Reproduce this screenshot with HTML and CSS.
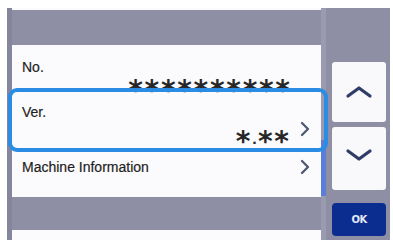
FILE: index.html
```html
<!DOCTYPE html>
<html>
<head>
<meta charset="utf-8">
<link rel="stylesheet" href="styles.css">
</head>
<body>
<div class="screen">
  <div class="panel">
    <div class="list">
      <div class="stub stub-top"></div>
      <div class="group">
        <div class="row row-no">
          <div class="label">No.</div>
          <div class="line line-no"><span class="ast">**********</span></div>
        </div>
        <div class="row row-ver">
          <div class="label">Ver.</div>
          <div class="line line-ver">
            <span class="ast">*</span><span class="dot">.</span><span class="ast">**</span>
            <svg class="chev" width="10" height="16" viewBox="0 0 10 16"><polyline points="2,2 8,8 2,14" fill="none" stroke="#4f596d" stroke-width="2.3" stroke-linecap="round" stroke-linejoin="round"/></svg>
          </div>
        </div>
        <div class="row row-mi">
          <div class="label grow">Machine Information</div>
          <svg class="chev" width="10" height="16" viewBox="0 0 10 16"><polyline points="2,2 8,8 2,14" fill="none" stroke="#4f596d" stroke-width="2.3" stroke-linecap="round" stroke-linejoin="round"/></svg>
        </div>
      </div>
      <div class="stub stub-bottom"></div>
    </div>
    <div class="scroll"><div class="thumb"></div></div>
    <div class="buttons">
      <div class="btn btn-up">
        <svg width="28" height="14" viewBox="0 0 28 14"><polyline points="3,11 14,3 25,11" fill="none" stroke="#2f3c68" stroke-width="3.2" stroke-linecap="round" stroke-linejoin="round"/></svg>
      </div>
      <div class="btn btn-down">
        <svg class="down-ico" width="28" height="14" viewBox="0 0 28 14"><polyline points="3,3 14,11 25,3" fill="none" stroke="#2f3c68" stroke-width="3.2" stroke-linecap="round" stroke-linejoin="round"/></svg>
      </div>
      <div class="btn btn-ok">OK</div>
    </div>
  </div>
</div>
</body>
</html>
```
FILE: styles.css
```css
html, body {
  margin: 0;
  padding: 0;
  background: #ffffff;
}
body {
  font-family: "Liberation Sans", Arial, sans-serif;
}
.screen {
  width: 393px;
  height: 240px;
  overflow: hidden;
  box-sizing: border-box;
  padding: 8px 0 0 7px;
}
.panel {
  display: flex;
  width: 383px;
  height: 232px;
  background: #8e8ea5;
}
.list {
  width: 309px;
  border-left: 5px solid #85859c;
  display: flex;
  flex-direction: column;
}
.stub {
  background: #fbfbfd;
}
.stub-top {
  height: 5px;
}
.stub-bottom {
  margin-top: 33px;
  height: 20px;
}
.group {
  margin-top: 35px;
  background: #fbfbfd;
}
.row {
  box-sizing: border-box;
  color: #1f1f1f;
}
.label {
  font-size: 14px;
  line-height: 16px;
  -webkit-text-stroke: 0.2px #1f1f1f;
}
.row-no {
  height: 48px;
  padding-top: 14px;
}
.row-ver {
  height: 54px;
  padding-top: 11px;
  position: relative;
}
.row-ver::after {
  content: "";
  position: absolute;
  left: -4px;
  right: -7px;
  top: -5px;
  bottom: -5px;
  border: 4px solid #2a8ce2;
  border-radius: 9px;
}
.row-mi {
  height: 50px;
  display: flex;
  align-items: center;
  padding: 0 11px 10px 10px;
}
.row-no .label, .row-ver .label {
  padding-left: 10px;
}
.grow {
  flex: 1;
}
.line {
  display: flex;
  justify-content: flex-end;
  align-items: flex-start;
}
.line-no {
  padding-right: 31px;
  margin-top: 4px;
}
.line-ver {
  padding-right: 11px;
  margin-top: 10px;
}
.ast {
  font-family: "DejaVu Sans", sans-serif;
  font-weight: bold;
  font-size: 28px;
  line-height: 24px;
  letter-spacing: 1.7px;
  color: #262626;
}
.line-ver .ast:last-of-type {
  margin-right: -1.7px;
}
.line-no .ast {
  margin-right: -1.7px;
}
.dot {
  font-family: "DejaVu Sans", sans-serif;
  font-weight: bold;
  font-size: 13px;
  line-height: 24px;
  margin-top: -2px;
  margin-right: 1px;
  color: #262626;
}
.chev {
  display: block;
  margin-left: 11px;
}
.line-ver .chev {
  margin-top: -9px;
}
.scroll {
  width: 5px;
  background: #9a9ab0;
}
.thumb {
  margin-top: 132px;
  height: 56px;
  background: #5b7ed8;
}
.buttons {
  width: 54px;
  padding: 54px 4px 0 6px;
  display: flex;
  flex-direction: column;
}
.btn {
  display: flex;
  align-items: center;
  justify-content: center;
  background: #f9f9fb;
  border-radius: 3px;
}
.btn-up {
  height: 60px;
}
.btn-down {
  height: 63px;
  margin-top: 5px;
}
.down-ico {
  margin-bottom: 7px;
}
.btn-ok {
  height: 33px;
  margin-top: 13px;
  background: #0b2d8f;
  border-radius: 4px;
  color: #e3e9f7;
  font-family: "DejaVu Sans", sans-serif;
  font-weight: bold;
  font-size: 10px;
  letter-spacing: -0.5px;
}
```
